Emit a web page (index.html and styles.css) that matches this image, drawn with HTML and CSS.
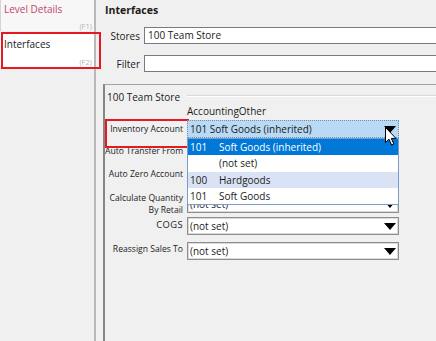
FILE: index.html
```html
<!DOCTYPE html>
<html lang="en">
<head>
    <meta charset="UTF-8">
    <meta name="viewport" content="width=device-width, initial-scale=1.0">
    <title>Interfaces</title>
    <link rel="stylesheet" href="styles.css">
</head>
<body>

<div class="window">
    <!-- Left navigation -->
    <aside class="nav">
        <div class="nav-item first">
            <span class="nav-title level">Level Details</span>
            <span class="nav-key">(F1)</span>
        </div>
        <div class="nav-item active">
            <span class="nav-title">Interfaces</span>
            <span class="nav-key">(F2)</span>
        </div>
    </aside>

    <!-- Main area -->
    <main class="content">
        <h1 class="heading">Interfaces</h1>

        <div class="form-row">
            <label class="row-label">Stores</label>
            <div class="textbox">100 Team Store</div>
        </div>
        <div class="form-row filter-row">
            <label class="row-label">Filter</label>
            <div class="textbox"></div>
        </div>

        <div class="panel">
            <div class="group-title">
                <span>100 Team Store</span>
                <span class="etch"></span>
            </div>
            <div class="section-name">AccountingOther</div>

            <!-- Inventory Account (open) -->
            <div class="field f-inventory">
                <label class="field-label marked">Inventory Account</label>
                <div class="combo focused">
                    <span class="combo-text">101 Soft Goods (inherited)</span>
                    <span class="arrow"></span>
                    <ul class="dropdown">
                        <li class="option selected"><span class="code">101</span>Soft Goods (inherited)</li>
                        <li class="option"><span class="code"></span>(not set)</li>
                        <li class="option hover"><span class="code">100</span>Hardgoods</li>
                        <li class="option"><span class="code">101</span>Soft Goods</li>
                    </ul>
                    <svg class="cursor" width="12" height="19" viewBox="0 0 12 19">
                        <path d="M0.5 0.5 L0.5 15.5 L4 12.2 L6.6 18 L8.8 17 L6.3 11.4 L11 11.4 Z" fill="#fff" stroke="#000" stroke-width="1"/>
                    </svg>
                </div>
            </div>

            <!-- these two sit under the open list -->
            <div class="field f-transfer">
                <label class="field-label">Auto Transfer From</label>
                <div class="combo"><span class="arrow"></span></div>
            </div>

            <div class="field f-zero">
                <label class="field-label">Auto Zero Account</label>
                <div class="combo"><span class="arrow"></span></div>
            </div>

            <div class="field f-calc">
                <label class="field-label">Calculate Quantity<br>By Retail</label>
                <div class="combo"><span class="combo-text">(not set)</span><span class="arrow"></span></div>
            </div>

            <div class="field f-cogs">
                <label class="field-label cogs">COGS</label>
                <div class="combo"><span class="combo-text">(not set)</span><span class="arrow"></span></div>
            </div>

            <div class="field f-reassign">
                <label class="field-label raised">Reassign Sales To</label>
                <div class="combo"><span class="combo-text">(not set)</span><span class="arrow"></span></div>
            </div>
        </div>
    </main>
</div>

<!-- red annotation box over the nav item -->
<div class="callout callout-nav"></div>

</body>
</html>
```

FILE: styles.css
```css
* {
    box-sizing: border-box;
}
body {
    margin: 0;
    width: 436px;
    height: 341px;
    overflow: hidden;
    position: relative;
    background: #f0f0f0;
    font-family: "Open Sans", "Noto Sans", sans-serif;
    font-size: 10px;
    color: #1b1b1b;
}
.window {
    display: flex;
    height: 341px;
}

/* navigation */
.nav {
    width: 96px;
    flex: none;
    border-right: 2px solid #b9b9b9;
}
.nav-item {
    display: flex;
    flex-direction: column;
    justify-content: space-between;
    padding: 2px 2px 1px 4px;
}
.nav-item.first {
    height: 31px;
    background: #f7f7f7;
    border-left: 1px solid #d4d4d4;
    padding-left: 3px;
}
.nav-item.active {
    height: 36px;
    margin-top: 1px;
    padding-top: 5px;
    padding-bottom: 2px;
    background: #fff;
}
.nav-title {
    line-height: 14px;
}
.nav-title.level {
    color: #c2456c;
}
.nav-key {
    align-self: flex-end;
    font-size: 7.5px;
    line-height: 8px;
    color: #b4b4b4;
}
.callout {
    position: absolute;
    border: 2px solid #e8191e;
}
.callout-nav {
    left: 1px;
    top: 32px;
    width: 100px;
    height: 37px;
}

/* main area */
.content {
    flex: 1;
    margin-left: 7px;
    overflow: hidden;
}
.heading {
    margin: 3px 0 0 2px;
    font-size: 10.5px;
    line-height: 14px;
    font-weight: bold;
}
.form-row {
    display: flex;
    align-items: center;
    gap: 4px;
    height: 17px;
    margin-top: 10px;
}
.form-row.filter-row {
    margin-top: 11px;
}
.row-label {
    width: 37px;
    flex: none;
    text-align: right;
}
.textbox {
    flex: none;
    width: 320px;
    height: 17px;
    padding-left: 3px;
    line-height: 15px;
    background: #fff;
    border: 1px solid #7a7a7a;
}

.panel {
    margin-top: 12px;
    height: 260px;
    border-top: 1px solid #a3a3a3;
    border-left: 2px solid #858585;
}
.group-title {
    display: flex;
    align-items: center;
    gap: 7px;
    height: 14px;
    margin-top: 5px;
    padding-left: 2px;
}
.etch {
    flex: 1;
    height: 2px;
    margin-top: -3px;
    border-top: 1px solid #d9d9d9;
    border-bottom: 1px solid #fff;
}
.section-name {
    margin-left: 82px;
    height: 14px;
    line-height: 14px;
}

/* fields */
.field {
    display: flex;
    align-items: center;
    height: 18px;
}
.f-inventory { margin-top: 2px; }
.f-transfer { margin-top: 4px; }
.f-zero { margin-top: 5px; }
.f-calc { margin-top: 12px; }
.f-cogs { margin-top: 4px; }
.f-reassign { margin-top: 7px; }

.field-label {
    width: 79px;
    flex: none;
    padding-right: 1px;
    text-align: right;
    white-space: nowrap;
    font-size: 8.6px;
    line-height: 12px;
}
.field-label.marked {
    position: relative;
}
.field-label.marked::after {
    content: "";
    position: absolute;
    left: 0;
    top: -4px;
    width: 80px;
    height: 25px;
    border: 2px solid #e8191e;
}
.field-label.cogs {
    font-size: 9.4px;
    letter-spacing: 0.4px;
    margin-top: -2px;
}
.field-label.raised {
    margin-top: -5px;
}

.combo {
    position: relative;
    display: flex;
    align-items: center;
    width: 212px;
    height: 18px;
    margin-left: 3px;
    padding-left: 2px;
    background: #fff;
    border: 1px solid #8e8e8e;
    box-shadow: inset 0 0 0 1px #dadada;
}
.combo.focused {
    background: #b9d9f4;
    border: 1px dotted #6f8fae;
    box-shadow: none;
}
.combo-text {
    line-height: 14px;
}
.arrow {
    margin-left: auto;
    margin-right: 2px;
    width: 0;
    height: 0;
    border-left: 6.5px solid transparent;
    border-right: 6.5px solid transparent;
    border-top: 7px solid #000;
}

/* open list */
.dropdown {
    position: absolute;
    left: -1px;
    top: 17px;
    width: 212px;
    margin: 0;
    padding: 0;
    list-style: none;
    background: #fff;
    border: 1px solid #7b9cc8;
    z-index: 2;
}
.option {
    display: flex;
    align-items: center;
    height: 16.25px;
    padding-left: 2px;
}
.option.selected {
    background: #0078d7;
    color: #fff;
}
.option.hover {
    background: #d9e3f5;
}
.code {
    width: 29px;
    flex: none;
}
.cursor {
    position: absolute;
    left: 197px;
    top: 6px;
    z-index: 3;
}
```
